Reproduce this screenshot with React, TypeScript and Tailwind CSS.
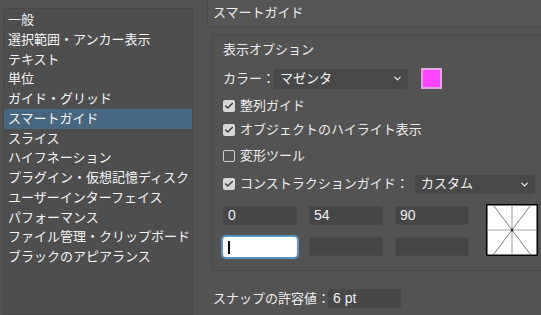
import { ChevronDown, Check } from 'lucide-react'

const items = [
  '一般',
  '選択範囲・アンカー表示',
  'テキスト',
  '単位',
  'ガイド・グリッド',
  'スマートガイド',
  'スライス',
  'ハイフネーション',
  'プラグイン・仮想記憶ディスク',
  'ユーザーインターフェイス',
  'パフォーマンス',
  'ファイル管理・クリップボード',
  'ブラックのアピアランス',
]

const font = { fontFamily: '"Liberation Sans", "Noto Sans CJK JP", sans-serif' }

function CheckRow({ label, checked }: { label: string; checked: boolean }) {
  return (
    <div className="flex h-5 items-center gap-[5px] whitespace-nowrap">
      {checked ? (
        <span className="flex h-[12px] w-[12px] shrink-0 items-center justify-center rounded-[2px] bg-[#d6d6d6]">
          <Check size={10} strokeWidth={3.5} className="text-[#3a3a3a]" />
        </span>
      ) : (
        <span className="h-[12px] w-[12px] shrink-0 rounded-[2px] border border-[#cfcfcf]" />
      )}
      <span>{label}</span>
    </div>
  )
}

function NumField({ value, focused }: { value?: string; focused?: boolean }) {
  if (focused) {
    return (
      <div className="flex h-[20px] w-[74px] items-center rounded-[3px] bg-white pl-[5px] ring-2 ring-[#5b93bf]">
        <span className="h-[13px] w-[1.5px] bg-black" />
      </div>
    )
  }
  return (
    <div className="flex h-[19px] w-[74px] items-center rounded-[2px] border border-[#4a4a4a] bg-[#464646] pl-[4px] text-[14px] text-[#ededed]">
      {value}
    </div>
  )
}

function GuideDiagram() {
  return (
    <svg width="52" height="52" viewBox="0 0 52 52">
      <rect x="0.75" y="0.75" width="50.5" height="50.5" fill="#fff" stroke="#000" strokeWidth="1.5" />
      <line x1="26" y1="1.5" x2="26" y2="50.5" stroke="#a8a8a8" strokeWidth="1.2" />
      <line x1="1.5" y1="26" x2="50.5" y2="26" stroke="#a8a8a8" strokeWidth="1.2" />
      <line x1="7.5" y1="1.5" x2="44.5" y2="50.5" stroke="#7a7a7a" strokeWidth="1" />
      <line x1="44.5" y1="1.5" x2="7.5" y2="50.5" stroke="#7a7a7a" strokeWidth="1" />
      <rect x="24.8" y="24.8" width="2.4" height="2.4" fill="#222" />
    </svg>
  )
}

export default function App() {
  return (
    <div
      className="flex h-[315px] w-[541px] overflow-hidden bg-[#535353] text-[13px] text-[#ececec]"
      style={font}
    >
      <div className="ml-[3px] mt-[8px] w-[190px] shrink-0 border border-[#474747] bg-[#4e4e4e] pt-[1px]">
        {items.map((it) => (
          <div
            key={it}
            className={
              'flex h-[19.75px] items-center whitespace-nowrap pl-[4px] text-[#f4f4f4] ' +
              (it === 'スマートガイド' ? 'bg-[#46677f]' : '')
            }
          >
            {it}
          </div>
        ))}
      </div>

      <div className="flex min-w-0 flex-1 flex-col">
        <div className="ml-[14px] flex h-[27px] items-center border-b border-l border-[#4b4b4b] bg-[#555555] pl-[5px]">
          スマートガイド
        </div>

        <div className="-mr-4 ml-[19px] mt-[8px] flex h-[236px] flex-col border border-[#4a4a4a] pl-[10px] pt-[4px]">
          <div className="flex h-5 items-center">表示オプション</div>

          <div className="mt-[8px] flex h-[21px] items-center">
            <span className="w-[51px] shrink-0 whitespace-nowrap">カラー：</span>
            <div className="flex h-[20px] w-[134px] shrink-0 items-center justify-between rounded-[2px] bg-[#484848] pl-[6px] pr-[5px] text-[#f2f2f2]">
              <span>マゼンタ</span>
              <ChevronDown size={11} strokeWidth={2.5} />
            </div>
            <span className="ml-[13px] h-[21px] w-[21px] shrink-0 border-2 border-[#e2a3e2] bg-[#fb44fb]" />
          </div>

          <div className="mt-[7px]">
            <CheckRow label="整列ガイド" checked />
          </div>
          <div className="mt-[4px]">
            <CheckRow label="オブジェクトのハイライト表示" checked />
          </div>
          <div className="mt-[6px]">
            <CheckRow label="変形ツール" checked={false} />
          </div>

          <div className="mt-[9px] flex h-[18px] items-center">
            <div className="w-[192px] shrink-0">
              <CheckRow label="コンストラクションガイド：" checked />
            </div>
            <div className="flex h-[19px] w-[120px] shrink-0 items-center justify-between rounded-[2px] bg-[#484848] pl-[6px] pr-[5px] text-[#f2f2f2]">
              <span>カスタム</span>
              <ChevronDown size={11} strokeWidth={2.5} />
            </div>
          </div>

          <div className="mt-[11px] flex items-start">
            <div className="mt-[2px] grid grid-cols-3 gap-x-[12px] gap-y-[12px]">
              <NumField value="0" />
              <NumField value="54" />
              <NumField value="90" />
              <NumField focused />
              <NumField />
              <NumField />
            </div>
            <div className="ml-[17px]">
              <GuideDiagram />
            </div>
          </div>
        </div>

        <div className="ml-[20px] mt-[18px] flex h-[19px] items-center whitespace-nowrap">
          <span>スナップの許容値：</span>
          <div className="-ml-[2px] flex h-[19px] w-[73px] items-center rounded-[2px] bg-[#474747] pl-[5px] text-[14px] text-[#f2f2f2]">
            6 pt
          </div>
        </div>
      </div>
    </div>
  )
}
